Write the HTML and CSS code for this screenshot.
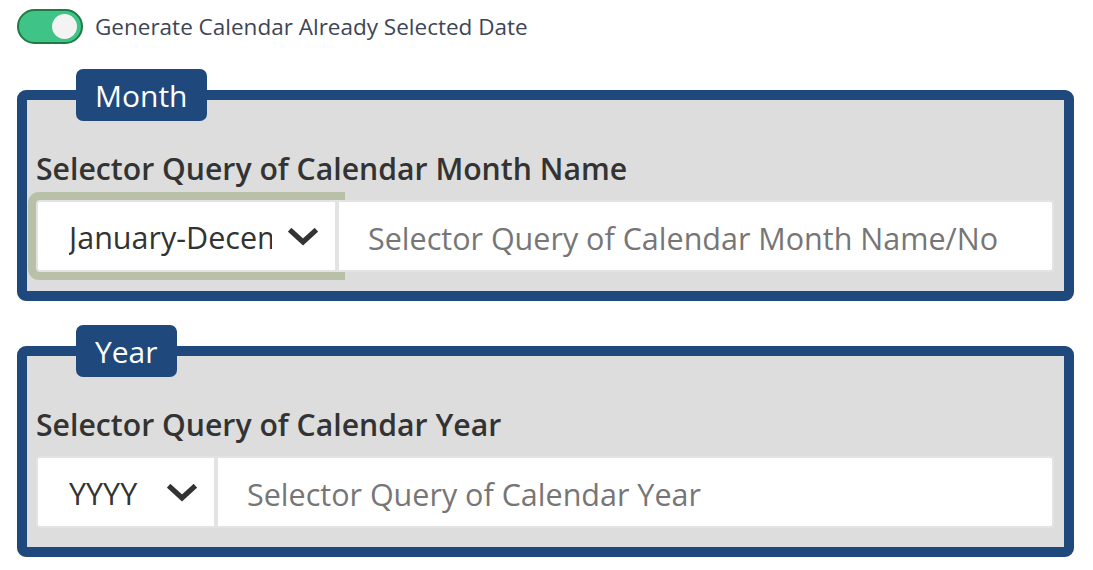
FILE: index.html
```html
<!DOCTYPE html>
<html lang="en">
<head>
<meta charset="utf-8">
<title>Calendar Selector</title>
<link rel="stylesheet" href="styles.css">
</head>
<body>
<div class="page">
  <label class="switch-row">
    <span class="switch"><span class="knob"></span></span>
    <span class="switch-text">Generate Calendar Already Selected Date</span>
  </label>

  <fieldset class="group">
    <legend class="group-legend">Month</legend>
    <div class="field-label">Selector Query of Calendar Month Name</div>
    <div class="input-group">
      <div class="select select-month is-focused">
        <span class="select-text">January-December</span>
        <svg class="chevron" viewBox="0 0 30 18" width="30" height="18" aria-hidden="true"><polyline points="3.5,3.5 15,14 26.5,3.5" fill="none" stroke="#333" stroke-width="5.2" stroke-linecap="square" stroke-linejoin="miter"/></svg>
      </div>
      <input class="text-input" type="text" placeholder="Selector Query of Calendar Month Name/No">
    </div>
  </fieldset>

  <fieldset class="group">
    <legend class="group-legend">Year</legend>
    <div class="field-label">Selector Query of Calendar Year</div>
    <div class="input-group">
      <div class="select select-year">
        <span class="select-text">YYYY</span>
        <svg class="chevron" viewBox="0 0 30 18" width="30" height="18" aria-hidden="true"><polyline points="3.5,3.5 15,14 26.5,3.5" fill="none" stroke="#333" stroke-width="5.2" stroke-linecap="square" stroke-linejoin="miter"/></svg>
      </div>
      <input class="text-input" type="text" placeholder="Selector Query of Calendar Year">
    </div>
  </fieldset>
</div>
</body>
</html>
```

FILE: styles.css
```css
* { box-sizing: border-box; }

html, body {
  margin: 0;
  padding: 0;
  background: #ffffff;
}

body {
  font-family: "Open Sans", "Noto Sans", sans-serif;
  color: #333333;
}

.page {
  padding: 9px 19px 0 17px;
}

.switch-row {
  display: flex;
  align-items: center;
  gap: 12px;
  height: 35px;
}

.switch {
  width: 66px;
  height: 35px;
  border-radius: 18px;
  background: #3fc386;
  border: 2px solid #1f7a45;
  display: flex;
  align-items: center;
  justify-content: flex-end;
  padding-right: 4px;
}

.knob {
  width: 25px;
  height: 25px;
  border-radius: 50%;
  background: #f3f3f3;
}

.switch-text {
  font-size: 22.5px;
  color: #3e4555;
}

.group {
  margin: 25px 0 0 0;
  border: 10px solid #1f497d;
  border-radius: 9px;
  background: #dddddd;
  padding: 28px 10px 19px 9px;
  min-width: 0;
}

.group + .group {
  margin-top: 24px;
}

.group-legend {
  margin-left: 40px;
  padding: 0 19px;
  height: 52px;
  line-height: 54px;
  background: #1f497d;
  color: #ffffff;
  font-size: 30px;
  border-radius: 7px;
}

.field-label {
  font-size: 30.2px;
  font-weight: 600;
  line-height: 40px;
  color: #333333;
  margin-bottom: 11px;
}

.input-group {
  display: flex;
  height: 72px;
}

.select {
  display: flex;
  align-items: center;
  background: #ffffff;
  border: 2px solid #e3e3e3;
  border-radius: 4px 0 0 4px;
  padding: 2px 17px 0 31px;
  flex: none;
}

.select-month { width: 301px; }
.select-year { width: 180px; }

.is-focused {
  box-shadow: 0 0 0 8px #b8c1a7;
}

.select-text {
  flex: 1;
  min-width: 0;
  overflow: hidden;
  white-space: nowrap;
  font-size: 30.5px;
  color: #333333;
}

.chevron {
  flex: none;
  margin-left: 16px;
}

.text-input {
  position: relative;
  z-index: 1;
  flex: 1;
  min-width: 0;
  height: 72px;
  margin: 0;
  border: 2px solid #e3e3e3;
  border-radius: 0 4px 4px 0;
  background: #ffffff;
  padding: 3px 20px 0 29px;
  font-family: "Open Sans", "Noto Sans", sans-serif;
  font-size: 30.5px;
  color: #333333;
  outline: none;
}

.text-input::placeholder {
  color: #767676;
  opacity: 1;
}
```
